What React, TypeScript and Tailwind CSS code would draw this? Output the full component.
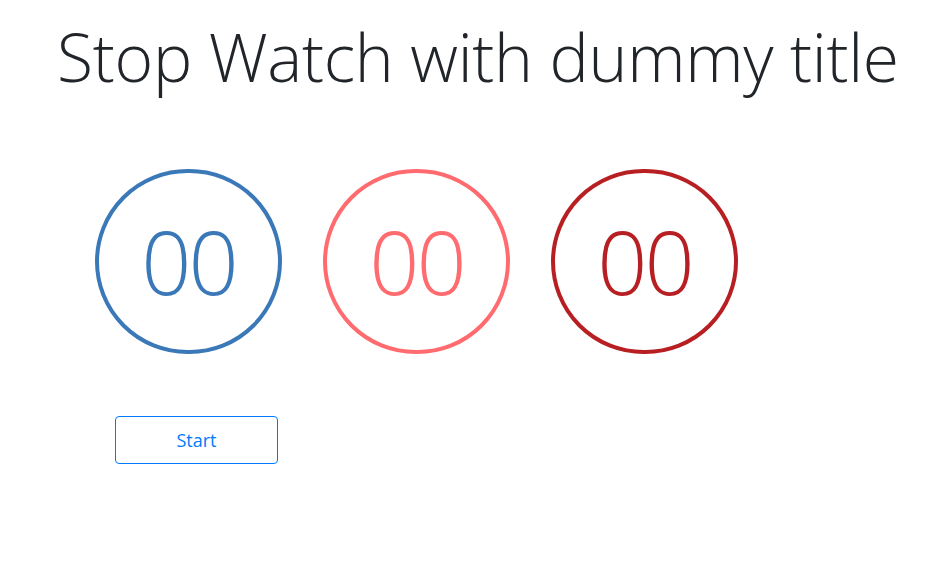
import React from 'react';

const dials = [
  { key: 'min', ring: 'border-[#3b78b8]', text: 'text-[#3b78b8]' },
  { key: 'sec', ring: 'border-[#ff6b6e]', text: 'text-[#ff6b6e]' },
  { key: 'ms', ring: 'border-[#b71f22]', text: 'text-[#b71f22]' },
];

const Dial: React.FC<{ ring: string; text: string }> = ({ ring, text }) => (
  <div className={`w-[187px] h-[185px] rounded-full border-[4px] ${ring} flex items-center justify-center`}>
    <span className={`text-[88px] leading-none font-light tracking-[-3px] ${text} -mt-[2px]`}>00</span>
  </div>
);

export default function App() {
  return (
    <div className="min-h-[563px] bg-white text-[#212529]" style={{ fontFamily: '"Open Sans", "Noto Sans", sans-serif' }}>
      <h1 className="pt-[17px] pl-[57px] text-[66px] leading-[1.2] font-light tracking-[-0.3px]">Stop Watch with dummy title</h1>
      <div className="flex gap-[41px] pl-[95px] pt-[73px]">
        {dials.map((d) => (
          <Dial key={d.key} ring={d.ring} text={d.text} />
        ))}
      </div>
      <div className="pl-[115px] pt-[62px]">
        <button className="w-[163px] h-[48px] rounded-[4px] border border-[#007bff] text-[#007bff] text-[18px]">
          Start
        </button>
      </div>
    </div>
  );
}
